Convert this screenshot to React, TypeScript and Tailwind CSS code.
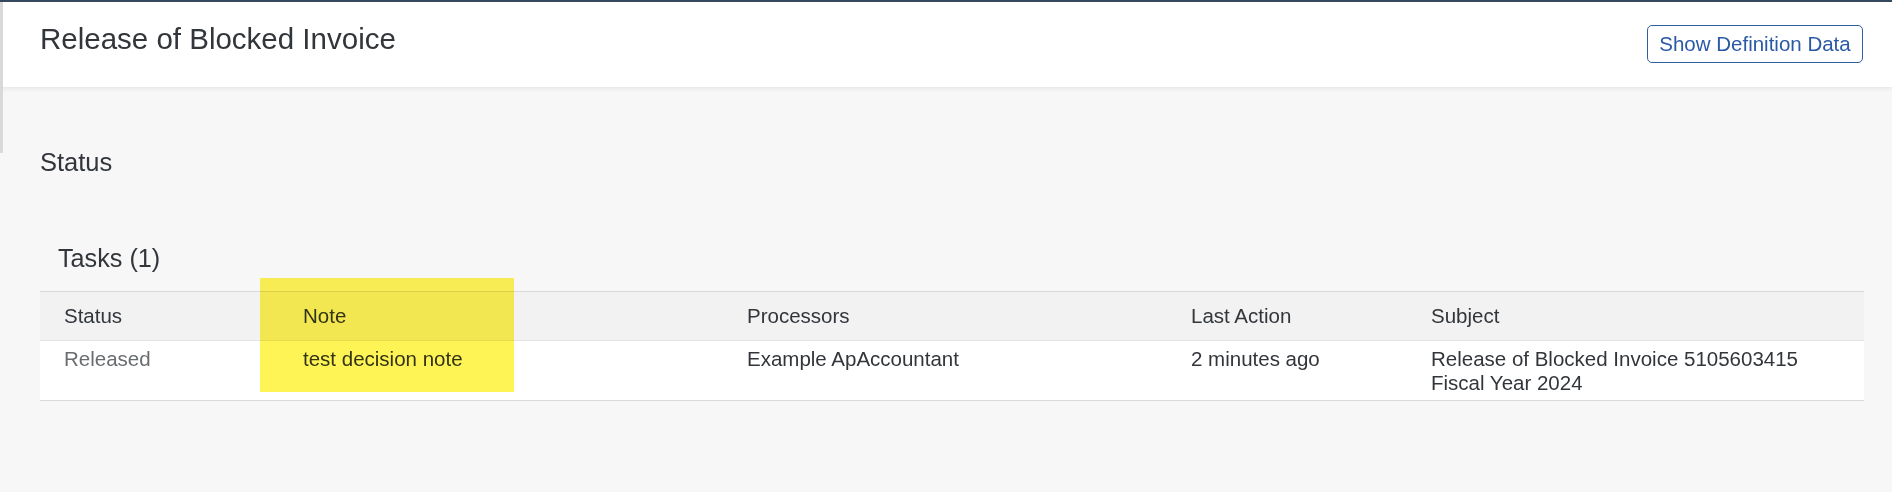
import React from "react";

const columns = ["Status", "Note", "Processors", "Last Action", "Subject"];

export default function App() {
    return (
        <div className="relative h-[492px] w-full overflow-hidden bg-[#f7f7f7] font-['Liberation_Sans',Arial,sans-serif] text-[#32363a]">
            <div className="h-[2px] bg-[#354a5f]" />
            {/* left scroll indicator */}
            <div className="absolute left-0 top-[2px] z-20 h-[151px] w-[3px] bg-[#d9d9d9]" />

            <header className="relative z-10 flex h-[85px] items-start justify-between bg-white pl-[40px] pr-[29px] shadow-[0_2px_4px_rgba(0,0,0,0.07)]">
                <h1 className="mt-[22px] text-[29.5px] leading-none">Release of Blocked Invoice</h1>
                <button className="mt-[23px] h-[38px] w-[216px] rounded-[5px] border border-[#2f5fa3] bg-white text-[20.5px] leading-none text-[#2a5aa6]">
                    Show Definition Data
                </button>
            </header>

            <main className="pl-[40px] pr-[28px]">
                <h2 className="mt-[63px] text-[25.5px] leading-none">Status</h2>
                <h3 className="mt-[70px] pl-[18px] text-[25.2px] leading-none">Tasks (1)</h3>

                <div className="mt-[20px] text-[20.5px] leading-[24px]">
                    <div className="grid h-[50px] grid-cols-[239px_444px_444px_240px_1fr] items-center border-t border-b border-t-[#d9d9d9] border-b-[#e5e5e5] bg-[#f2f2f2]">
                        {columns.map((c) => (
                            <div key={c} className="pl-[24px]">
                                {c}
                            </div>
                        ))}
                    </div>
                    <div className="grid h-[60px] grid-cols-[239px_444px_444px_240px_1fr] items-start border-b border-[#d9d9d9] bg-white pt-[6px]">
                        <div className="pl-[24px] text-[#6a6d70]">Released</div>
                        <div className="pl-[24px]">test decision note</div>
                        <div className="pl-[24px]">Example ApAccountant</div>
                        <div className="pl-[24px]">2 minutes ago</div>
                        <div className="pl-[24px] pr-[40px]">Release of Blocked Invoice 5105603415 Fiscal Year 2024</div>
                    </div>
                </div>
            </main>

            {/* highlighter mark over the Note column */}
            <div className="pointer-events-none absolute left-[260px] top-[278px] z-30 h-[114px] w-[254px] bg-[#fff455] mix-blend-multiply" />
        </div>
    );
}
